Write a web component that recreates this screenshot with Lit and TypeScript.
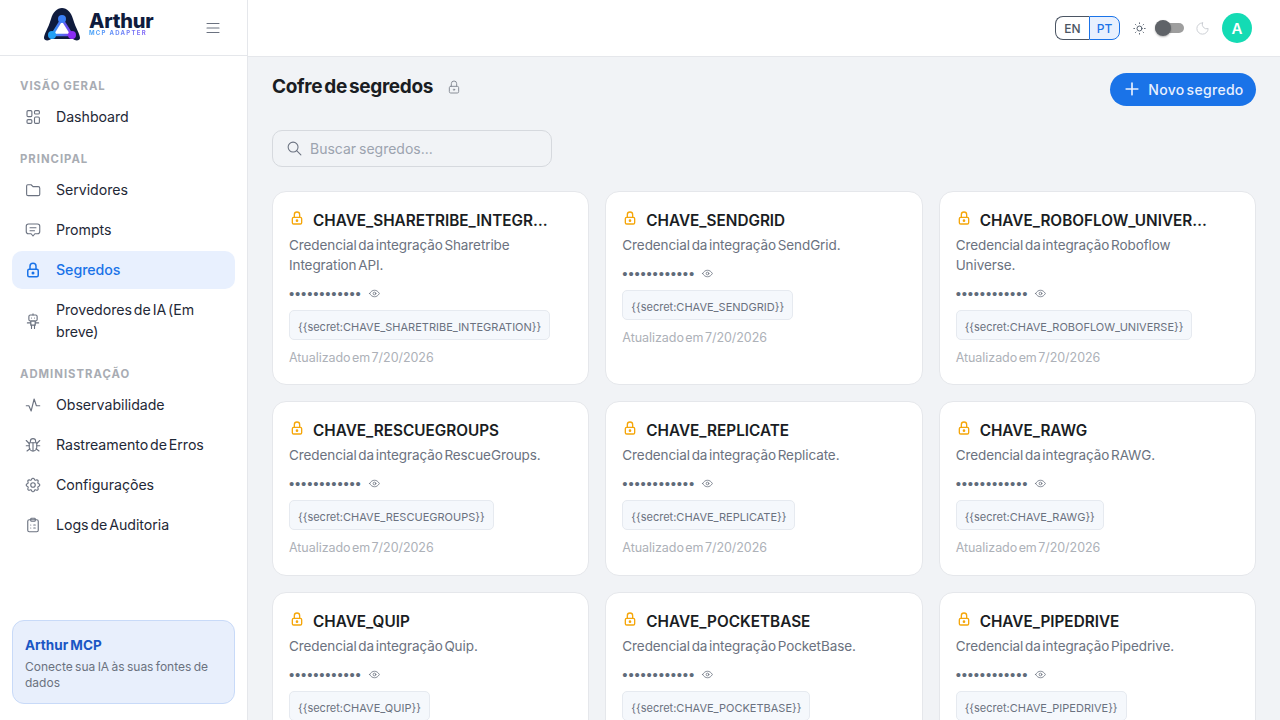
import { LitElement, html, svg, css } from 'lit';
import { customElement } from 'lit/decorators.js';

const icon = (body: unknown, size = 18, sw = 1.5) => html`<svg
  width=${size} height=${size} viewBox="0 0 24 24" fill="none" stroke="currentColor"
  stroke-width=${sw} stroke-linecap="round" stroke-linejoin="round">${body}</svg>`;

const icons = {
  dashboard: svg`<rect x="4" y="3.500" width="6.500" height="8" rx="1.500"/><rect x="14" y="3.500" width="6.500" height="4.500" rx="1.500"/><rect x="4" y="15.500" width="6.500" height="5" rx="1.500"/><rect x="14" y="12" width="6.500" height="8.500" rx="1.500"/>`,
  folder: svg`<path d="M3.500 6.500A1.500 1.500 0 0 1 5 5H9.500l2.500 2.500h7A2 2 0 0 1 21 9.500v8a2 2 0 0 1-2 2H5.500a2 2 0 0 1-2-2z"/>`,
  prompt: svg`<path d="M6 4h12a3 3 0 0 1 3 3v7a3 3 0 0 1-3 3h-3.500L12 20l-2.500-3H6a3 3 0 0 1-3-3V7a3 3 0 0 1 3-3z"/><path d="M8 9h8M8 13h6"/>`,
  lock: svg`<rect x="5" y="11" width="14" height="10" rx="2"/><circle cx="12" cy="16" r="1"/><path d="M8 11V7a4 4 0 0 1 8 0v4"/>`,
  robot: svg`<rect x="6.500" y="4" width="11" height="8" rx="2"/><path d="M10 8h.01M14 8h.01M12 2.500V4"/><rect x="9" y="12" width="6" height="5.500"/><path d="M4.500 14.500H9M15 14.500h4.500M10 17.500V22M14 17.500V22"/>`,
  pulse: svg`<path d="M3 13h3.500l3 7 4-16 3 9H21"/>`,
  bug: svg`<path d="M8.500 8V7a3.500 3.500 0 0 1 7 0v1"/><path d="M7 9h10v6a5 5 0 0 1-10 0z"/><path d="M12 9v11M3 6l4 4M21 6l-4 4M3 13h4M17 13h4M4 20l4-3M20 20l-4-3"/>`,
  gear: svg`<circle cx="12" cy="12" r="3"/><path d="M10.300 4.300c.4-1.800 3-1.800 3.400 0a1.700 1.700 0 0 0 2.600 1.100c1.500-.9 3.300.8 2.400 2.400a1.700 1.700 0 0 0 1 2.500c1.800.4 1.800 3 0 3.400a1.700 1.700 0 0 0-1 2.600c.9 1.500-.9 3.300-2.400 2.400a1.700 1.700 0 0 0-2.600 1c-.4 1.800-3 1.800-3.400 0a1.700 1.700 0 0 0-2.600-1c-1.500.9-3.300-.9-2.400-2.400a1.700 1.700 0 0 0-1-2.600c-1.800-.4-1.800-3 0-3.400a1.700 1.700 0 0 0 1-2.500c-.9-1.600.9-3.300 2.400-2.400a1.700 1.700 0 0 0 2.600-1.100z"/>`,
  clipboard: svg`<rect x="5" y="5" width="14" height="16" rx="2"/><rect x="9" y="3" width="6" height="4" rx="1"/><path d="M9 12h.01M13 12h2M9 16h.01M13 16h2"/>`,
  menu: svg`<path d="M4 6h16M4 12h16M4 18h16"/>`,
  sun: svg`<circle cx="12" cy="12" r="4"/><path d="M3 12h1M20 12h1M12 3v1M12 20v1M5.600 5.600l.7.7M17.700 17.700l.7.7M5.600 18.400l.7-.7M17.700 6.300l.7-.7"/>`,
  moon: svg`<path d="M12 3a9 9 0 1 0 9 9 7 7 0 0 1-9-9z"/>`,
  plus: svg`<path d="M12 5v14M5 12h14"/>`,
  search: svg`<circle cx="10" cy="10" r="7"/><path d="M21 21l-6-6"/>`,
  eye: svg`<path d="M3 12c2.400-4 5.400-6 9-6s6.600 2 9 6c-2.400 4-5.400 6-9 6s-6.600-2-9-6z"/><circle cx="12" cy="12" r="2.500"/>`,
};

const navSections = [
  { label: 'Visão Geral', items: [{ name: 'Dashboard', icon: icons.dashboard }] },
  {
    label: 'Principal',
    items: [
      { name: 'Servidores', icon: icons.folder },
      { name: 'Prompts', icon: icons.prompt },
      { name: 'Segredos', icon: icons.lock, active: true },
      { name: 'Provedores de IA (Em breve)', icon: icons.robot },
    ],
  },
  {
    label: 'Administração',
    items: [
      { name: 'Observabilidade', icon: icons.pulse },
      { name: 'Rastreamento de Erros', icon: icons.bug },
      { name: 'Configurações', icon: icons.gear },
      { name: 'Logs de Auditoria', icon: icons.clipboard },
    ],
  },
];

const secrets = [
  { key: 'CHAVE_SHARETRIBE_INTEGRATION', title: 'CHAVE_SHARETRIBE_INTEGR…', desc: 'Sharetribe Integration API' },
  { key: 'CHAVE_SENDGRID', desc: 'SendGrid' },
  { key: 'CHAVE_ROBOFLOW_UNIVERSE', title: 'CHAVE_ROBOFLOW_UNIVER…', desc: 'Roboflow Universe' },
  { key: 'CHAVE_RESCUEGROUPS', desc: 'RescueGroups' },
  { key: 'CHAVE_REPLICATE', desc: 'Replicate' },
  { key: 'CHAVE_RAWG', desc: 'RAWG' },
  { key: 'CHAVE_QUIP', desc: 'Quip' },
  { key: 'CHAVE_POCKETBASE', desc: 'PocketBase' },
  { key: 'CHAVE_PIPEDRIVE', desc: 'Pipedrive' },
];

@customElement('app-root')
export class AppRoot extends LitElement {
  static styles = css`
    :host {
      display: flex;
      width: 1280px;
      height: 720px;
      overflow: hidden;
      font-family: Inter, 'Noto Sans', sans-serif;
      word-spacing: -2px;
      color: #1f2937;
      background: #f1f3f6;
    }
    svg { display: block; flex: none; }

    .sidebar {
      width: 248px;
      flex: none;
      display: flex;
      flex-direction: column;
      background: #fff;
      border-right: 1px solid #e5e7eb;
      box-sizing: border-box;
    }
    .brand {
      height: 56px;
      flex: none;
      box-sizing: border-box;
      border-bottom: 1px solid #e5e7eb;
      display: flex;
      align-items: center;
      padding: 0 25px 0 43px;
      justify-content: space-between;
      color: #6b7280;
    }
    .logo { display: flex; align-items: center; gap: 8px; margin-top: -7px; }
    .logo-text { display: flex; flex-direction: column; }
    .logo-name { font-size: 20px; line-height: 17px; font-weight: 800; color: #0f1b3d; letter-spacing: -0.2px; }
    .logo-sub {
      font-size: 6px; line-height: 7px; font-weight: 700; letter-spacing: 1.280px; word-spacing: 0; margin-top: -1px;
      background: linear-gradient(90deg, #3fa2f7, #8b5cf6);
      -webkit-background-clip: text; background-clip: text; color: transparent;
    }
    nav { flex: 1; padding: 23px 12px 0; display: flex; flex-direction: column; gap: 16px; }
    .section { display: flex; flex-direction: column; gap: 2px; }
    .section-label {
      font-size: 11.300px;
      line-height: 14px;
      font-weight: 700;
      letter-spacing: 1px;
      word-spacing: -1px;
      color: #a8acb3;
      text-transform: uppercase;
      padding: 0 8px 3px;
    }
    .item {
      display: flex;
      align-items: center;
      gap: 14px;
      min-height: 38px;
      padding: 8px 12px;
      box-sizing: border-box;
      border-radius: 10px;
      font-size: 14.200px;
      letter-spacing: -0.05px;
      line-height: 22px;
      font-weight: 400;
      color: #1f2937;
    }
    .item svg { color: #6b7280; }
    .item.active { background: #e8f0fe; color: #1a73e8; font-weight: 500; }
    .item.active svg { color: #1a73e8; }
    .promo {
      margin: 0 12px 16px;
      height: 84px;
      box-sizing: border-box;
      padding: 15px 12px;
      background: #e8effc;
      border: 1px solid #c8daf8;
      border-radius: 12px;
    }
    .promo-title { font-size: 13.500px; line-height: 18px; font-weight: 700; color: #1a56c4; word-spacing: -1px; }
    .promo-text { font-size: 12px; line-height: 16px; color: #6b7280; margin-top: 5px; word-spacing: -1px; }

    .content { flex: 1; min-width: 0; display: flex; flex-direction: column; }
    header {
      height: 57px;
      flex: none;
      box-sizing: border-box;
      background: #fff;
      border-bottom: 1px solid #e5e7eb;
      display: flex;
      align-items: center;
      justify-content: flex-end;
      padding: 0 28px 0 0;
    }
    .lang { display: flex; height: 24px; font-size: 12px; font-weight: 500; }
    .lang span { display: flex; align-items: center; justify-content: center; box-sizing: border-box; }
    .en { width: 34px; border: 1px solid #4b5563; border-right: none; border-radius: 8px 0 0 8px; color: #4b5563; }
    .pt { width: 31px; border: 1px solid #1a73e8; border-radius: 0 8px 8px 0; background: #e8f0fe; color: #1a73e8; }
    .sun { margin-left: 12px; color: #4b5563; }
    .toggle { position: relative; width: 29px; height: 10px; margin-left: 8px; border-radius: 5px; background: #9e9e9e; }
    .knob { position: absolute; left: 0; top: -3px; width: 16px; height: 16px; border-radius: 50%; background: #5f6368; box-shadow: 0 1px 2px rgba(0, 0, 0, 0.3); }
    .moon { margin-left: 11px; color: #c9ccd1; }
    .avatar {
      width: 30px; height: 30px; margin-left: 12px; border-radius: 50%;
      background: #14dbb4; color: #fff; font-size: 15px; font-weight: 600;
      display: flex; align-items: center; justify-content: center;
    }

    main { flex: 1; padding: 16px 24px 0; overflow: hidden; }
    .title-row { display: flex; justify-content: space-between; align-items: flex-start; height: 57px; }
    .title { display: flex; align-items: center; gap: 13px; height: 27px; }
    h1 { margin: 0; font-size: 19px; line-height: 27px; font-weight: 700; color: #1a1d23; letter-spacing: -0.35px; }
    .title svg { color: #8a8f98; }
    .new {
      height: 33px; box-sizing: border-box; width: 146px; padding-bottom: 1px;
      display: flex; align-items: center; justify-content: center; gap: 6px;
      background: #1a73e8; color: #e8f0fe; border-radius: 17px;
      font-size: 14px; font-weight: 500; letter-spacing: 0.3px;
    }
    .search {
      width: 280px; height: 37px; box-sizing: border-box;
      display: flex; align-items: center; gap: 7px; padding: 0 13px;
      border: 1px solid #d6d9de; border-radius: 10px; color: #6b7280;
      font-size: 14px; word-spacing: -1px;
    }
    .search span { color: #9ca3af; }
    .grid { margin-top: 24px; display: grid; grid-template-columns: repeat(3, 1fr); gap: 16px; }
    .card {
      background: #fff;
      border: 1px solid #e5e7eb;
      border-radius: 14px;
      padding: 16px 16px 17.500px;
      min-width: 0;
      box-sizing: border-box;
    }
    .card-head { display: flex; gap: 8px; height: 25px; }
    .card-head svg { color: #f5a60a; margin-top: 2px; }
    .key { font-size: 15.300px; line-height: 25px; font-weight: 600; color: #1a1d23; white-space: nowrap; }
    .desc { font-size: 13.500px; letter-spacing: -0.09px; line-height: 19.500px; color: #6b7280; margin-top: 3px; max-width: 265px; }
    .value { display: flex; align-items: center; gap: 6px; height: 20px; margin-top: 8px; color: #6b7280; }
    .dots { font-family: 'Liberation Sans', sans-serif; font-size: 15px; letter-spacing: 0.800px; word-spacing: 0; color: #5f6b7a; }
    .chip {
      display: inline-block; height: 30px; box-sizing: border-box; margin-top: 6.500px;
      padding: 0 8px; line-height: 32px; font-size: 11px; color: #6b7280; word-spacing: 0;
      background: #f5f8fc; border: 1px solid #e6eaf0; border-radius: 5px; vertical-align: top;
    }
    .date { font-size: 12.500px; letter-spacing: -0.05px; line-height: 18px; color: #adb1b8; margin-top: 9px; }
  `;

  private renderLogo() {
    return html`<div class="logo">
      <svg width="38" height="33" viewBox="0 0 38 33">
        <defs>
          <linearGradient id="tri" x1="0" y1="0" x2="1" y2="0">
            <stop offset="0" stop-color="#2f9bf5" />
            <stop offset="1" stop-color="#7c3aed" />
          </linearGradient>
        </defs>
        <path d="M1 30 C1 26 5 21 8 11 C10 4 14 0 19 0 C24 0 28 4 30 11 C33 21 37 26 37 30 C37 33 32 33 30 31 L8 31 C6 33 1 33 1 30z" fill="#0f1b3d" />
        <path d="M19 11 L9 27 L29 27z" fill="#fff" stroke="url(#tri)" stroke-width="2.500" />
        <circle cx="19" cy="11" r="4" fill="#3b7ff6" />
        <circle cx="9" cy="27" r="4" fill="#22a0f5" />
        <circle cx="29" cy="27" r="4" fill="#8b2cf5" />
      </svg>
      <div class="logo-text">
        <div class="logo-name">Arthur</div>
        <div class="logo-sub">MCP ADAPTER</div>
      </div>
    </div>`;
  }

  render() {
    return html`
      <aside class="sidebar">
        <div class="brand">${this.renderLogo()} ${icon(icons.menu, 18)}</div>
        <nav>
          ${navSections.map(
            (s) => html`<div class="section">
              <div class="section-label">${s.label}</div>
              ${s.items.map(
                (i: any) => html`<div class="item ${i.active ? 'active' : ''}">
                  ${icon(i.icon, 18, i.active ? 2 : 1.5)}<span>${i.name}</span>
                </div>`,
              )}
            </div>`,
          )}
        </nav>
        <div class="promo">
          <div class="promo-title">Arthur MCP</div>
          <div class="promo-text">Conecte sua IA às suas fontes de dados</div>
        </div>
      </aside>
      <div class="content">
        <header>
          <div class="lang"><span class="en">EN</span><span class="pt">PT</span></div>
          <span class="sun">${icon(icons.sun, 15)}</span>
          <div class="toggle"><div class="knob"></div></div>
          <span class="moon">${icon(icons.moon, 15)}</span>
          <div class="avatar">A</div>
        </header>
        <main>
          <div class="title-row">
            <div class="title"><h1>Cofre de segredos</h1>${icon(icons.lock, 16)}</div>
            <div class="new">${icon(icons.plus, 20, 2)}<span>Novo segredo</span></div>
          </div>
          <div class="search">${icon(icons.search, 17)}<span>Buscar segredos...</span></div>
          <div class="grid">
            ${secrets.map(
              (s) => html`<div class="card">
                <div class="card-head">${icon(icons.lock, 16, 2)}<div class="key">${s.title ?? s.key}</div></div>
                <div class="desc">Credencial da integração ${s.desc}.</div>
                <div class="value"><span class="dots">••••••••••••</span>${icon(icons.eye, 13)}</div>
                <div class="chip">{{secret:${s.key}}}</div>
                <div class="date">Atualizado em 7/20/2026</div>
              </div>`,
            )}
          </div>
        </main>
      </div>
    `;
  }
}
